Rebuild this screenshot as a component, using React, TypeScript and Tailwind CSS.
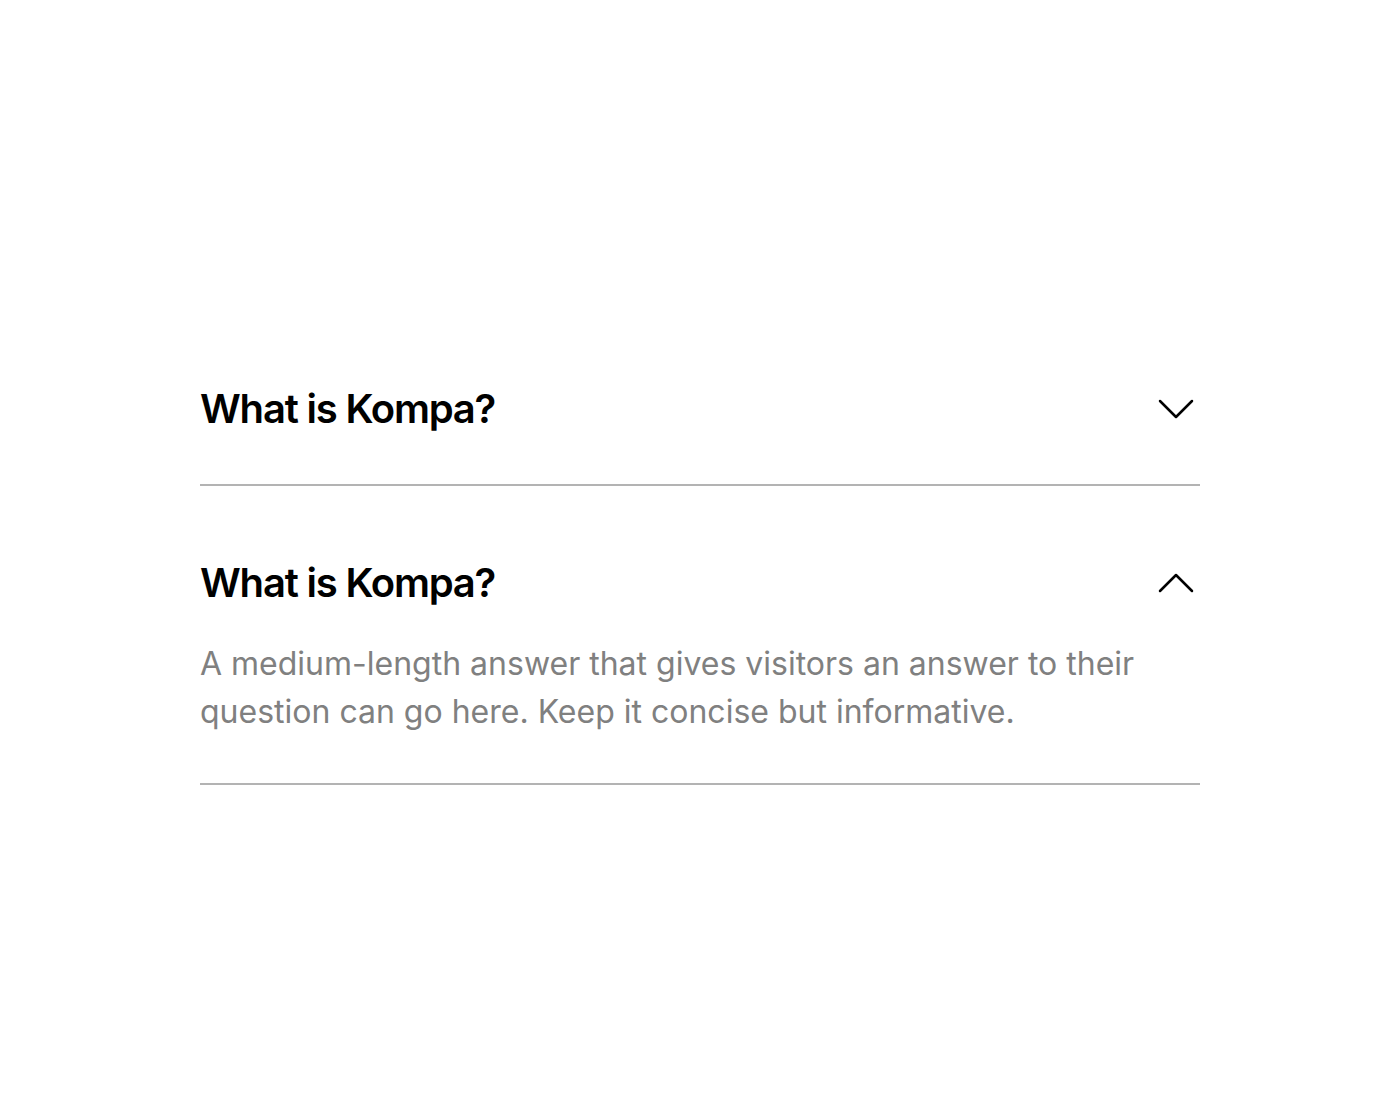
import React from 'react';

const Chevron = ({ up }: { up?: boolean }) => (
  <svg width="36" height="20" viewBox="0 0 36 20" fill="none" className="shrink-0">
    <path
      d={up ? 'M2 18L18 2L34 18' : 'M2 2L18 18L34 2'}
      stroke="#000"
      strokeWidth="2.5"
      strokeLinecap="round"
      strokeLinejoin="round"
    />
  </svg>
);

export default function App() {
  return (
    <div
      className="w-full min-h-[1120px] bg-white flex items-center justify-center"
      style={{ fontFamily: 'Inter, "Noto Sans", sans-serif' }}
    >
      <div className="w-[1000px] flex flex-col">
        {/* item 1 - closed */}
        <div className="pt-[49px] pb-[51px] border-b-2 border-[#b3b3b3]">
          <div className="flex items-center justify-between pr-[6px]">
            <h3 className="text-[40px] leading-[48px] font-semibold text-black tracking-[-0.03em]">What is Kompa?</h3>
            <Chevron />
          </div>
        </div>

        {/* item 2 - open */}
        <div className="pt-[73px] pb-[47px] border-b-2 border-[#b3b3b3]">
          <div className="flex items-center justify-between pr-[6px]">
            <h3 className="text-[40px] leading-[48px] font-semibold text-black tracking-[-0.03em]">What is Kompa?</h3>
            <Chevron up />
          </div>
          <p className="mt-[33px] text-[32px] leading-[48px] text-[#808080] max-w-[960px]">
            A medium-length answer that gives visitors an answer to their question can go here. Keep it concise but informative.
          </p>
        </div>
      </div>
    </div>
  );
}
